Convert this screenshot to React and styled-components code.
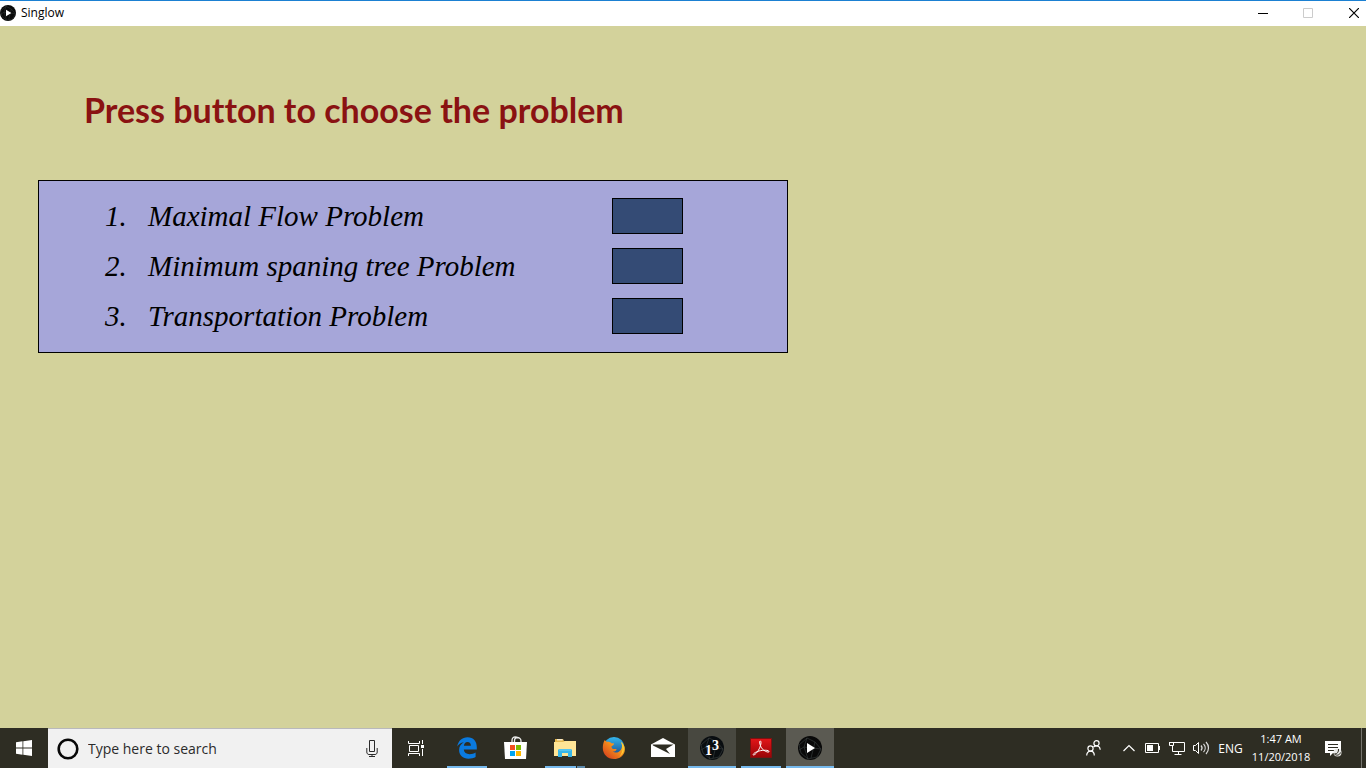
import React from "react";
import styled, { createGlobalStyle } from "styled-components";

const GlobalStyle = createGlobalStyle`
  *, *::before, *::after { box-sizing: border-box; }
  body { margin: 0; }
  button, input { font: inherit; color: inherit; }
`;

const uiFont = `"Open Sans", "Noto Sans", sans-serif`;

const Screen = styled.div`
  display: flex;
  flex-direction: column;
  min-height: 100vh;
  background: #d3d29b;
  font-family: ${uiFont};
`;

const TitleBar = styled.header`
  display: flex;
  align-items: center;
  height: 26px;
  padding-bottom: 1px;
  border-top: 1px solid #1b80d2;
  background: #fff;
  color: #000;
  font-size: 12px;
`;

const AppName = styled.span`
  flex: 1;
  margin-left: 5px;
  line-height: 16px;
`;

const WindowButton = styled.button`
  display: flex;
  align-items: center;
  justify-content: center;
  width: 45px;
  height: 24px;
  padding: 0;
  border: 0;
  background: transparent;
  color: ${(p) => (p.disabled ? "#cccccc" : "#000")};
`;

const CloseButton = styled(WindowButton)`
  width: 36px;
  padding-left: 11px;
`;

const Canvas = styled.main`
  flex: 1;
  padding: 59px 38px 38px;
`;

const Heading = styled.h1`
  margin: 0 0 45px 46px;
  color: #8a1212;
  font-family: Lato, sans-serif;
  font-size: 34px;
  font-weight: 700;
  font-variant-ligatures: none;
  line-height: 50px;
`;

const ProblemList = styled.ol`
  display: flex;
  flex-direction: column;
  gap: 14px;
  max-width: 750px;
  margin: 0;
  padding: 17px 104px 18px 66px;
  border: 1px solid #000;
  background: #a6a6d9;
  list-style: none;
`;

const ProblemRow = styled.li`
  display: grid;
  grid-template-columns: 43px 1fr 71px;
  align-items: end;
  color: #000;
  font-family: "Liberation Serif", serif;
  font-size: 29px;
  font-style: italic;
  line-height: 36px;
`;

const ChooseButton = styled.button`
  height: 36px;
  padding: 0;
  border: 1px solid #000;
  background: #344b75;
`;

const Taskbar = styled.footer`
  display: flex;
  height: 40px;
  background: #2e2d23;
  color: #fff;
`;

const TaskButton = styled.button`
  display: flex;
  align-items: center;
  justify-content: center;
  width: 48px;
  height: 40px;
  padding: 0;
  border: 0;
  background: ${(p) => p.$fill || "transparent"};
`;

const SearchBox = styled.label`
  display: flex;
  align-items: center;
  width: 344px;
  padding: 0 14px 0 8px;
  border-top: 1px solid #b9b9bb;
  background: #f1f1f1;
  color: #2b2b2b;
`;

const SearchInput = styled.input`
  flex: 1;
  min-width: 0;
  padding: 0;
  margin-left: 8px;
  border: 0;
  outline: 0;
  background: transparent;
  font-size: 14px;
  line-height: 20px;
  &::placeholder { color: #2b2b2b; opacity: 1; }
`;

const Apps = styled.nav`
  display: flex;
  gap: 1px;
  margin-left: 3px;
`;

const AppButton = styled(TaskButton)`
  position: relative;
  &::after {
    content: "";
    position: absolute;
    bottom: 0;
    left: ${(p) => (p.$wide ? 0 : 4)}px;
    right: ${(p) => (p.$wide ? 0 : 4)}px;
    height: 2px;
    background: ${(p) =>
      p.$stacked
        ? "linear-gradient(90deg, #76b9ed 31px, #2e2d23 31px, #2e2d23 32px, #5c89ab 32px)"
        : p.$open
        ? "#76b9ed"
        : "transparent"};
  }
`;

const Tray = styled.div`
  display: flex;
  margin-left: auto;
`;

const TrayButton = styled(TaskButton)`
  width: ${(p) => p.$w || 24}px;
`;

const Language = styled(TrayButton)`
  font-size: 12px;
`;

const Clock = styled(TrayButton)`
  flex-direction: column;
  font-size: 11px;
  line-height: 18px;
  white-space: nowrap;
`;

const ShowDesktop = styled.button`
  width: 5px;
  margin-left: 9px;
  padding: 0;
  border: 0;
  border-left: 1px solid #75746d;
  background: transparent;
`;

const Art = ({ w, h = w, children }) => (
  <svg width={w} height={h} viewBox={`0 0 ${w} ${h}`} fill="none" aria-hidden="true">
    {children}
  </svg>
);

const Web = () => (
  <g stroke="#3b4142" strokeWidth=".6">
    <path d="M1 9 9 2l8 4 6 7-4 8-9 2-7-6zM9 2l-3 9-5 3M17 6l-4 16M6 11l17 2M6 11l4 12" />
  </g>
);

const PlayIcon = ({ size }) => (
  <svg width={size} height={size} viewBox="0 0 24 24" aria-hidden="true">
    <circle cx="12" cy="12" r="12" fill="#090909" />
    <g fill="none"><Web /></g>
    <path d="M9 7v10l8-5z" fill="#fff" />
  </svg>
);

const WindowsIcon = () => (
  <Art w={16}>
    <path fill="#fff" d="M0 2.2 6.5 1.3v6.2H0zM7.3 1.2 16 0v7.5H7.3zM0 8.4h6.5v6.3L0 13.8zM7.3 8.4H16V16l-8.7-1.2z" />
  </Art>
);

const MicIcon = () => (
  <Art w={12} h={17}>
    <g stroke="#2b2b2b">
      <path d="M3.500.500h5v11h-5zM.800 8v4c0 1.500.800 2.500 2.200 2.500h6c1.400 0 2.200-1 2.200-2.500V8M6 14.500v2M3 16.500h6" />
    </g>
  </Art>
);

const TaskViewIcon = () => (
  <Art w={17} h={17}>
    <path stroke="#fff" d="M.5 1v2.500h11V1M.5 16v-2.500h11V16M1.500 5.500h9v6h-9zM14.500 0v4M14.500 9v7" />
    <path fill="#fff" d="M13 5h3v3h-3z" />
  </Art>
);

const EdgeIcon = () => (
  <Art w={20} h={22}>
    <path fill="#0a7adf" d="M.2 9.600C1.300 3.800 5 .3 10.600.3c5.800 0 9.200 4.200 9.200 9.600v2.700H6.800c.2 3 2.500 4.600 5.800 4.600 2.400 0 4.400-.6 6-1.600v4.500c-1.900 1.100-4.400 1.600-7.100 1.600-5.700 0-9.400-3.400-9.400-8.700 0-3.400 1.700-6.200 4.700-7.800C3.700 5.700 1.500 7.200.2 9.600zm6.700-.8h7c0-2.500-1.200-3.800-3.400-3.800-2.100 0-3.300 1.500-3.600 3.800z" />
  </Art>
);

const StoreIcon = () => (
  <Art w={24} h={24}>
    <path d="M8 7V4.500C8 2.300 9.200.8 11.300.8c1.200 0 2 .4 2.600 1.300M10.500 7V5c0-2.200.9-3.500 2.800-3.500C15.300 1.500 17 3 17 5v2" stroke="#ededed" strokeWidth="1.300" />
    <path d="M0 6h23l-1 17H1z" fill="#fff" />
    <path d="M6 9h5v5H6z" fill="#f25022" />
    <path d="M12 9h5v5h-5z" fill="#7fba00" />
    <path d="M6 15h5v5H6z" fill="#00a4ef" />
    <path d="M12 15h5v5h-5z" fill="#ffb900" />
  </Art>
);

const FolderIcon = () => (
  <Art w={22} h={20}>
    <path d="M1 1h8l1 2h10.500v3H1z" fill="#e6b94f" />
    <path d="M3 1.800h5.500" stroke="#fff" />
    <path d="M0 4h9l2-1h11v15H0z" fill="#ffe596" />
    <path d="M4 19v-7l1-1h12l1 1v7h-4v-4H8v4z" fill="#37b6e8" />
    <path d="M5 12h12" stroke="#74d4f4" />
  </Art>
);

const FirefoxIcon = () => (
  <Art w={24} h={24}>
    <defs>
      <linearGradient id="foxGlobe" x1="0" y1="0" x2="0" y2="1">
        <stop stopColor="#34b7ed" /><stop offset="1" stopColor="#153a80" />
      </linearGradient>
      <linearGradient id="foxFur" x1="1" y1="0" x2="0" y2="1">
        <stop stopColor="#ffdc38" /><stop offset=".45" stopColor="#f38b1c" /><stop offset="1" stopColor="#cf321d" />
      </linearGradient>
    </defs>
    <circle cx="12" cy="11.500" r="10.500" fill="url(#foxGlobe)" />
    <path d="M2.500 4.200c.9.300 1.400.8 2 1.600 2.200-.3 3.900.2 5 1.400l2.600.3c-.2 1.500-1.500 2-2.600 2.700.1 1.800.5 2.500 2.100 2.900l3-.2c-.3 1.800-2.100 2.700-4 2.600 2.700 2 6.200 1.100 8.200-1.500 1.700-2.400 1.500-5.500.2-8.200 3.500 2.600 4.600 6.500 3.500 10.200C21 20.500 17 23 12 23 5.500 23 .8 18.200.8 12c0-3 .5-5.500 1.700-7.800z" fill="url(#foxFur)" />
    <path d="M19 6c4.300 4.600 3.800 11-1.500 14.500 3.800-4.700 3.800-9.300 1.500-14.500z" fill="#ffcf35" />
  </Art>
);

const MailIcon = () => (
  <Art w={24} h={20}>
    <path d="M0 6.500 12 0l12 6.500V19H0z" fill="#fff" />
    <path d="M1.500 6.500h21L15 11l4 5L2 7.500z" fill="#2e2d23" />
  </Art>
);

const ProcessingIcon = () => (
  <Art w={24}>
    <circle cx="12" cy="12" r="12" fill="#090d10" />
    <Web />
    <text x="5" y="19" fill="#fff" fontFamily="Liberation Serif, serif" fontSize="14" fontWeight="700">1</text>
    <text x="12" y="14" fill="#fff" fontFamily="Liberation Serif, serif" fontSize="14" fontWeight="700">3</text>
  </Art>
);

const AcrobatIcon = () => (
  <Art w={22} h={20}>
    <defs>
      <linearGradient id="pdfRed" x1="0" y1="0" x2="0" y2="1">
        <stop stopColor="#e31519" /><stop offset="1" stopColor="#980407" />
      </linearGradient>
    </defs>
    <path d="M.5.500h21v19H.5z" fill="url(#pdfRed)" stroke="#801010" />
    <path d="M10 3c1.300-.2 1.200 2 .5 4.500C9.300 12 5.500 17 3.500 17c-1.500-.4 1.500-3 5.500-4 4-1 10-1.200 10 .6 0 1.400-4.500-.2-6.800-2.800C10.200 8.500 9 3.400 10 3z" stroke="#fff" />
  </Art>
);

const PeopleIcon = () => (
  <Art w={15} h={16}>
    <g stroke="#fff" strokeWidth="1.200">
      <circle cx="4.500" cy="8.500" r="2.600" />
      <path d="M.7 15.500c0-2.700 1.500-4.400 3.800-4.400s3.800 1.700 3.800 4.400" />
      <circle cx="10.500" cy="3.200" r="2.600" />
      <path d="M7.500 7c.8-.8 1.800-1.200 3-1.200 2.300 0 3.500 1.500 3.700 4" />
    </g>
  </Art>
);

const BatteryIcon = () => (
  <Art w={16} h={10}>
    <path d="M.5.500h13v9H.5zM14.500 3v4" stroke="#fff" />
    <path d="M2 2h6v6H2z" fill="#fff" />
  </Art>
);

const NetworkIcon = () => (
  <Art w={16} h={14}>
    <path d="M5 1.500h10.500v9H3.500V5M9.500 10.500v3M5.500 13.500h7M.5 1v3.500h4V1M0 1.500h5" stroke="#fff" />
  </Art>
);

const VolumeIcon = () => (
  <Art w={17} h={14}>
    <path d="M.5 4.500h2l3-3v11l-3-3h-2z" stroke="#fff" />
    <path d="M8 4.500c1.300 1.500 1.300 3.500 0 5M10.500 2.800c2.200 2.400 2.200 6 0 8.400M13 1c3.300 3.500 3.300 8.500 0 12" stroke="#ddd" strokeWidth="1.200" />
  </Art>
);

const ActionIcon = () => (
  <Art w={17} h={17}>
    <path d="M0 1h16v12H8l-3 3v-3H0z" fill="#fff" />
    <path d="M3 4.500h10M3 7.500h10M3 10.500h6" stroke="#2e2d23" />
    <circle cx="12.500" cy="12.500" r="4" fill="#e8e8e6" />
    <path d="M13.500 9c.3 3-1.200 5-4 5 2 2 5.200 1.300 6-1.500" stroke="#2e2d23" />
  </Art>
);

const problems = [
  "Maximal Flow Problem",
  "Minimum spaning tree Problem",
  "Transportation Problem",
];

const apps = [
  { name: "Microsoft Edge", icon: <EdgeIcon />, open: true },
  { name: "Store", icon: <StoreIcon /> },
  { name: "File Explorer", icon: <FolderIcon />, stacked: true },
  { name: "Firefox", icon: <FirefoxIcon /> },
  { name: "Mail", icon: <MailIcon /> },
  { name: "Processing", icon: <ProcessingIcon />, open: true, wide: true, fill: "#484840" },
  { name: "Acrobat Reader", icon: <AcrobatIcon />, open: true },
  { name: "Singlow", icon: <PlayIcon size={24} />, open: true, wide: true, fill: "#5b5a52" },
];

export default function App() {
  return (
    <Screen>
      <GlobalStyle />
      <TitleBar>
        <PlayIcon size={16} />
        <AppName>Singlow</AppName>
        <WindowButton aria-label="Minimize">
          <Art w={10}><path d="M0 5.500h10" stroke="currentColor" /></Art>
        </WindowButton>
        <WindowButton aria-label="Maximize" disabled>
          <Art w={10}><path d="M.5.500h9v9h-9z" stroke="currentColor" /></Art>
        </WindowButton>
        <CloseButton aria-label="Close">
          <Art w={10}><path d="m0 0 10 10M10 0 0 10" stroke="currentColor" strokeWidth="1.200" /></Art>
        </CloseButton>
      </TitleBar>

      <Canvas>
        <Heading>Press button to choose the problem</Heading>
        <ProblemList>
          {problems.map((name, i) => (
            <ProblemRow key={name}>
              <span>{i + 1}.</span>
              <label htmlFor={`problem-${i}`}>{name}</label>
              <ChooseButton id={`problem-${i}`} type="button" />
            </ProblemRow>
          ))}
        </ProblemList>
      </Canvas>

      <Taskbar>
        <TaskButton aria-label="Start"><WindowsIcon /></TaskButton>
        <SearchBox>
          <Art w={24}><circle cx="12" cy="12" r="9.300" stroke="#080808" strokeWidth="2.600" /></Art>
          <SearchInput type="text" placeholder="Type here to search" aria-label="Search" />
          <MicIcon />
        </SearchBox>
        <TaskButton aria-label="Task view"><TaskViewIcon /></TaskButton>
        <Apps>
          {apps.map((a) => (
            <AppButton key={a.name} aria-label={a.name} $open={a.open} $stacked={a.stacked} $wide={a.wide} $fill={a.fill}>
              {a.icon}
            </AppButton>
          ))}
        </Apps>
        <Tray>
          <TrayButton $w={48} aria-label="People"><PeopleIcon /></TrayButton>
          <TrayButton aria-label="Show hidden icons">
            <Art w={12} h={8}><path d="m.5 7 5.500-5.500L11.500 7" stroke="#fff" strokeWidth="1.200" /></Art>
          </TrayButton>
          <TrayButton aria-label="Battery"><BatteryIcon /></TrayButton>
          <TrayButton aria-label="Network"><NetworkIcon /></TrayButton>
          <TrayButton aria-label="Volume"><VolumeIcon /></TrayButton>
          <Language $w={35}>ENG</Language>
          <Clock $w={66}>
            <span>1:47 AM</span>
            <span>11/20/2018</span>
          </Clock>
          <TrayButton $w={38} aria-label="Action center"><ActionIcon /></TrayButton>
          <ShowDesktop aria-label="Show desktop" />
        </Tray>
      </Taskbar>
    </Screen>
  );
}
